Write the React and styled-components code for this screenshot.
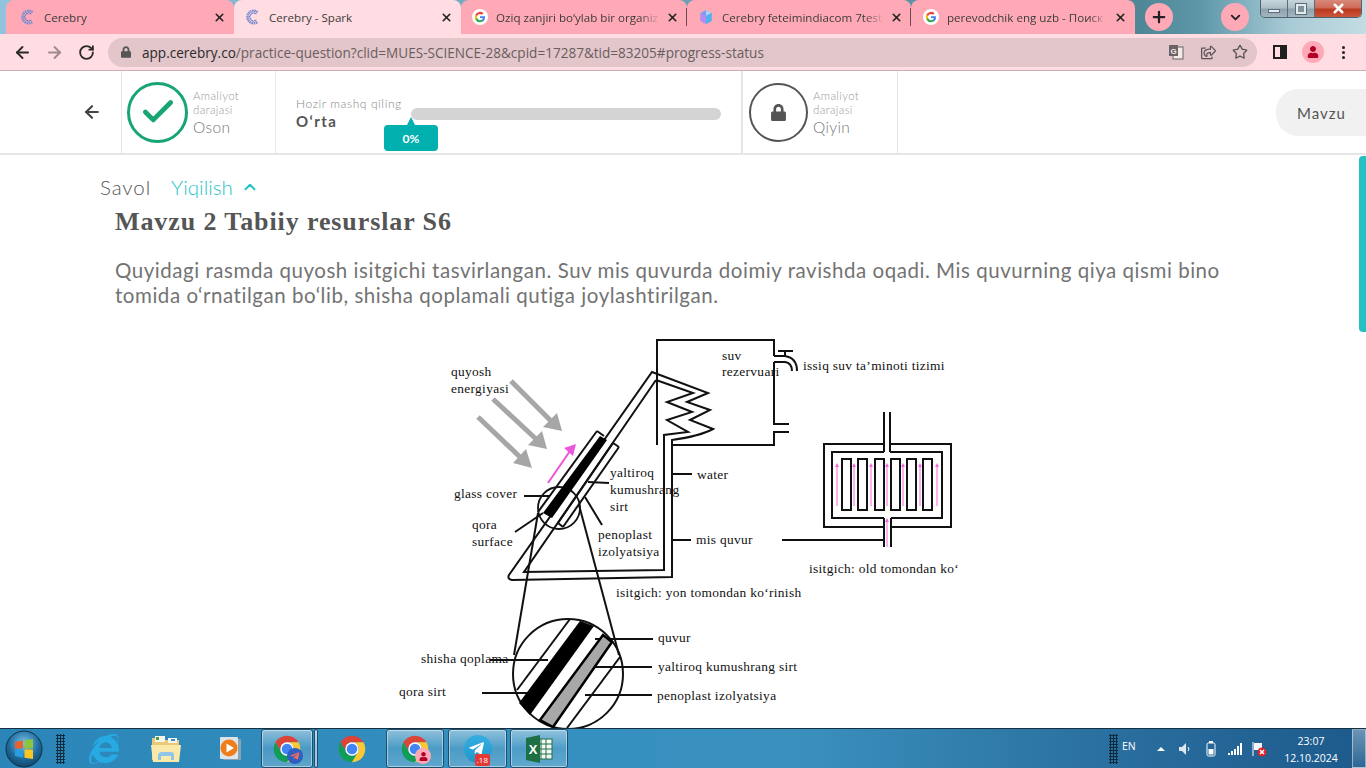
import React from 'react'
import styled, { createGlobalStyle } from 'styled-components'
import { ArrowLeft, ArrowRight, RotateCw, Star, Plus, ChevronDown, ChevronUp, X, Check } from 'lucide-react'
import { FaLock, FaUser, FaRegShareSquare, FaInternetExplorer, FaTelegramPlane } from 'react-icons/fa'

const Global = createGlobalStyle`
  html, body { margin: 0; padding: 0; height: 100%; overflow: hidden; background: #fff; }
  * { box-sizing: border-box; }
`

const Page = styled.div`
  width: 1366px;
  height: 768px;
  display: flex;
  flex-direction: column;
  overflow: hidden;
  font-family: Lato, sans-serif;
`

/* browser chrome */
const TabStrip = styled.div`
  height: 34px;
  flex: none;
  display: flex;
  padding-left: 6px;
  position: relative;
  background: linear-gradient(90deg, #8fc4dc 0, #8fc4dc 6px, #4f8796 1140px, #5e97a8 1200px, #a9cbd6 1290px, #c4dce2 1366px);
`

const Tab = styled.div`
  width: ${p => p.$w}px;
  height: 34px;
  flex: none;
  display: flex;
  align-items: center;
  padding: 0 8px 0 ${p => p.$pad || 14}px;
  border-radius: 8px 8px 0 0;
  background: ${p => (p.$active ? '#ffdde2' : '#ffa9b7')};
  position: relative;
  &::after {
    content: '';
    display: ${p => (p.$sep ? 'block' : 'none')};
    position: absolute;
    right: 0;
    top: 8px;
    height: 18px;
    width: 1px;
    background: #6b4a52;
  }
`

const Favicon = styled.svg`
  width: 16px;
  height: 16px;
  flex: none;
`

const TabTitle = styled.span`
  flex: 1;
  min-width: 0;
  margin-left: 8px;
  font-family: 'Open Sans', sans-serif;
  font-size: 11.6px;
  color: #3c3c3c;
  white-space: nowrap;
  overflow: hidden;
  -webkit-mask-image: ${p => (p.$fade ? 'linear-gradient(90deg, #000 88%, transparent 100%)' : 'none')};
  mask-image: ${p => (p.$fade ? 'linear-gradient(90deg, #000 88%, transparent 100%)' : 'none')};
`

const CloseTab = styled(X)`
  width: 13px;
  height: 13px;
  flex: none;
  margin-left: 6px;
  color: #222;
  stroke-width: 3;
`

const RoundBtn = styled.div`
  width: 28px;
  height: 28px;
  margin: 3px 0 0 ${p => p.$ml}px;
  border-radius: 50%;
  background: #ffa9b7;
  display: flex;
  align-items: center;
  justify-content: center;
  color: #222;
  flex: none;
`

const WinControls = styled.div`
  position: absolute;
  top: 0;
  right: 4px;
  height: 18px;
  width: 102px;
  display: flex;
  border: 1px solid #4d6470;
  border-top: none;
  border-radius: 0 0 5px 5px;
  overflow: hidden;
`

const WinBtn = styled.div`
  flex: ${p => (p.$close ? '0 0 46px' : 1)};
  display: flex;
  align-items: center;
  justify-content: center;
  border-right: 1px solid #5a6d78;
  background: ${p =>
    p.$close
      ? 'linear-gradient(#d8897a 0, #cf6b58 45%, #bb3a1e 55%, #c8563c 100%)'
      : 'linear-gradient(#c7d6dc 0, #aebfc7 45%, #8ea3ad 55%, #a4b6be 100%)'};
  &:last-child { border-right: none; }
`

const MinGlyph = styled.span`
  width: 12px;
  height: 4px;
  background: #e9eef0;
  border: 1px solid #5a6d78;
  margin-top: 5px;
`

const RestoreGlyph = styled.span`
  width: 10px;
  height: 10px;
  border: 2px solid #e4eaec;
  outline: 1px solid #5a6d78;
  background: #7f939d;
`

const Toolbar = styled.div`
  height: 37px;
  flex: none;
  display: flex;
  align-items: center;
  background: #ffdde2;
  padding-left: 6px;
  border-bottom: 1px solid #c9aeb6;
`

const NavBtn = styled.div`
  width: 32px;
  display: flex;
  justify-content: center;
  color: ${p => (p.$off ? '#9e8a8e' : '#2b2b2b')};
  flex: none;
`

const Omnibox = styled.div`
  width: 1149px;
  height: 29px;
  margin-left: 6px;
  border-radius: 15px;
  background: #e2c6ca;
  display: flex;
  align-items: center;
  padding: 0 1px 0 13px;
  flex: none;
`

const UrlLock = styled(FaLock)`
  width: 10px;
  height: 12px;
  color: #555;
  flex: none;
`

const Url = styled.span`
  margin-left: 11px;
  font-family: 'Open Sans', sans-serif;
  font-size: 13.57px;
  color: #6a5d60;
  flex: 1;
  white-space: nowrap;
  b { font-weight: 400; color: #2a2a2a; }
`

const OmniIcon = styled.div`
  width: 32px;
  display: flex;
  justify-content: center;
  align-items: center;
  color: #5c5557;
  flex: none;
`

const ToolIcons = styled.div`
  display: flex;
  align-items: center;
  flex: 1;
  padding-left: 16px;
`

const SidebarGlyph = styled.span`
  width: 14px;
  height: 14px;
  border: 2px solid #1f1f1f;
  border-right-width: 7px;
  flex: none;
`

const Avatar = styled.div`
  width: 22px;
  height: 22px;
  margin-left: 15px;
  border-radius: 50%;
  background: #ffa9b7;
  display: flex;
  align-items: center;
  justify-content: center;
  color: #b00028;
  flex: none;
`

const Dots = styled.div`
  margin-left: 18px;
  display: flex;
  flex-direction: column;
  gap: 2px;
  span { width: 3px; height: 3px; border-radius: 50%; background: #222; }
`

/* practice header */
const Header = styled.div`
  height: 84px;
  flex: none;
  display: flex;
  background: #fff;
  border-bottom: 2px solid #e6e6e6;
`

const BackCell = styled.div`
  width: 122px;
  display: flex;
  align-items: center;
  justify-content: flex-end;
  padding-right: 19px;
  border-right: 1px solid #e6e6e6;
  color: #444;
  flex: none;
`

const LevelCell = styled.div`
  width: ${p => p.$w}px;
  display: flex;
  align-items: center;
  padding-left: ${p => p.$pad}px;
  border-right: 1px solid #e6e6e6;
  flex: none;
`

const Ring = styled.div`
  width: ${p => p.$size}px;
  height: ${p => p.$size}px;
  border-radius: 50%;
  border: 2px solid ${p => p.$color};
  border-width: ${p => p.$bw}px;
  display: flex;
  align-items: center;
  justify-content: center;
  color: ${p => p.$color};
  flex: none;
`

const LevelText = styled.div`
  margin-left: 5px;
  margin-top: 1px;
  color: #9a9a9a;
  font-size: 11.5px;
  line-height: 14px;
  font-weight: 300;
  letter-spacing: 0.35px;
  strong {
    display: block;
    margin-top: 1px;
    font-weight: 300;
    font-size: 15.5px;
    line-height: 18px;
    color: #777;
    letter-spacing: 0.4px;
  }
`

const ProgressCell = styled.div`
  width: 467px;
  border-right: 2px solid #e6e6e6;
  display: flex;
  padding: 26px 0 0 20px;
  flex: none;
`

const ProgressLabel = styled.div`
  width: 115px;
  flex: none;
  font-size: 12px;
  line-height: 14px;
  font-weight: 300;
  color: #888;
  letter-spacing: 0.6px;
  strong {
    display: block;
    margin-top: 1px;
    font-size: 15px;
    line-height: 18px;
    font-weight: 700;
    color: #555;
    letter-spacing: 1.4px;
  }
`

const ProgressTrack = styled.div`
  width: 310px;
  height: 12px;
  margin-top: 11px;
  border-radius: 6px;
  background: #d4d4d4;
  position: relative;
  flex: none;
`

const ProgressTip = styled.div`
  position: absolute;
  left: -27px;
  top: 17px;
  width: 54px;
  height: 26px;
  border-radius: 4px;
  background: #00b0ae;
  color: #fff;
  font-size: 12px;
  font-weight: 700;
  display: flex;
  align-items: center;
  justify-content: center;
  &::before {
    content: '';
    position: absolute;
    left: 23px;
    top: -8px;
    border-left: 4px solid transparent;
    border-right: 4px solid transparent;
    border-bottom: 8px solid #00b0ae;
  }
`

const HeaderSpacer = styled.div`
  flex: 1;
`

const TopicBtn = styled.div`
  width: 90px;
  height: 47px;
  margin-top: 18px;
  padding-left: 21px;
  border-radius: 22px 0 0 22px;
  background: #f1f1f1;
  color: #555;
  font-size: 15px;
  font-weight: 400;
  letter-spacing: 1px;
  display: flex;
  align-items: center;
  flex: none;
`

/* question area */
const Workspace = styled.div`
  flex: 1;
  min-height: 0;
  display: flex;
  background: #fff;
  overflow: hidden;
`

const Content = styled.div`
  flex: 1;
  min-width: 0;
  padding-top: 20px;
`

const Switcher = styled.div`
  display: flex;
  align-items: center;
  height: 24px;
  padding-left: 100px;
  font-size: 20.5px;
  font-weight: 300;
  letter-spacing: 0.9px;
  color: #555;
`

const Solution = styled.span`
  margin-left: 20px;
  color: #1fc4c8;
  letter-spacing: 0;
  display: flex;
  align-items: center;
  gap: 8px;
`

const Title = styled.h1`
  margin: 8px 0 0 115px;
  font-family: 'Liberation Serif', serif;
  font-size: 26px;
  line-height: 30px;
  font-weight: 700;
  color: #555;
  letter-spacing: 0.9px;
`

const Lead = styled.p`
  margin: 21px 0 0 115px;
  font-size: 20.5px;
  line-height: 25px;
  font-weight: 400;
  color: #737373;
  letter-spacing: 0.54px;
  white-space: nowrap;
`

const Figure = styled.svg`
  display: block;
  width: 580px;
  height: 398px;
  margin: 22px 0 0 390px;
`

const Label = styled.text`
  font-family: 'Liberation Serif', serif;
  font-size: 13.4px;
  letter-spacing: 0.32px;
  fill: #111;
`

const Scrollbar = styled.div`
  width: 7px;
  flex: none;
  background: #fff;
  div {
    height: 176px;
    margin-top: 1px;
    border-radius: 4px 0 0 4px;
    background: #25c0c4;
  }
`

/* windows taskbar */
const Taskbar = styled.div`
  height: 40px;
  flex: none;
  display: flex;
  align-items: center;
  border-top: 1px solid #17303f;
  background: linear-gradient(90deg, #2c85b8 0, #3590c0 560px, #3a90bd 800px, #2a70a0 1100px, #1d5a8c 1366px);
  position: relative;
`

const Orb = styled.svg`
  width: 38px;
  height: 38px;
  margin-left: 5px;
  flex: none;
`

const Grip = styled.div`
  width: 9px;
  height: 30px;
  margin-left: ${p => p.$ml}px;
  flex: none;
  background-image: radial-gradient(#0f2c3f 1px, transparent 1.2px);
  background-size: 3px 3px;
`

const Pinned = styled.div`
  width: ${p => p.$w}px;
  height: 39px;
  margin-left: ${p => p.$ml || 0}px;
  display: flex;
  align-items: center;
  justify-content: center;
  position: relative;
  flex: none;
  border-radius: 3px;
  ${p =>
    p.$open &&
    `
    border: 1px solid #1c4f6e;
    box-shadow: inset 0 0 0 1px rgba(255,255,255,.45);
    background: linear-gradient(rgba(255,255,255,.45), rgba(255,255,255,.12) 50%, rgba(255,255,255,.22));
  `}
`

const IconSvg = styled.svg`
  width: ${p => p.$size}px;
  height: ${p => p.$size}px;
  flex: none;
`

const CornerBadge = styled.div`
  position: absolute;
  right: ${p => p.$r}px;
  bottom: ${p => p.$b}px;
  width: 16px;
  height: 16px;
  border-radius: 50%;
  background: ${p => p.$bg};
  color: ${p => p.$fg};
  display: flex;
  align-items: center;
  justify-content: center;
`

const TeleCircle = styled.div`
  width: 28px;
  height: 28px;
  border-radius: 50%;
  background: linear-gradient(#37aee2, #1e96c8);
  color: #fff;
  display: flex;
  align-items: center;
  justify-content: center;
  padding-right: 2px;
`

const CountBadge = styled.div`
  position: absolute;
  right: 16px;
  bottom: 1px;
  padding: 0 2px;
  height: 12px;
  background: #e53935;
  border-radius: 2px;
  color: #fff;
  font-family: 'Open Sans', sans-serif;
  font-size: 8px;
  line-height: 12px;
`

const IeWrap = styled.div`
  width: 32px;
  height: 32px;
  color: #27a9e1;
  display: flex;
  align-items: center;
  justify-content: center;
`

const Tray = styled.div`
  margin-left: auto;
  display: flex;
  align-items: center;
  height: 39px;
  color: #fff;
  font-family: 'Open Sans', sans-serif;
`

const TrayLang = styled.span`
  margin-left: 4px;
  margin-top: -6px;
  font-size: 10.5px;
  width: 28px;
`

const TrayCell = styled.div`
  width: ${p => p.$w}px;
  display: flex;
  justify-content: center;
  align-items: center;
  flex: none;
`

const UpTriangle = styled.span`
  border-left: 4px solid transparent;
  border-right: 4px solid transparent;
  border-bottom: 4px solid #fff;
`

const Clock = styled.div`
  width: 78px;
  margin-top: 3px;
  text-align: center;
  font-size: 10.5px;
  line-height: 17px;
  flex: none;
`

const ShowDesktop = styled.div`
  width: 14px;
  height: 39px;
  margin-left: 2px;
  border: 1px solid rgba(255,255,255,.45);
  background: linear-gradient(rgba(255,255,255,.35), rgba(255,255,255,.08));
  flex: none;
`

const CerebryIcon = () => (
  <Favicon viewBox="0 0 16 16">
    <path d="M12.6 3.2A6.2 6.2 0 1 0 12.6 12.8" fill="none" stroke="#7f8fd0" strokeWidth="2.6" strokeDasharray="1.6 .5" />
    <path d="M11.4 5A4 4 0 1 0 11.4 11" fill="none" stroke="#5d78c4" strokeWidth="1" />
  </Favicon>
)

const GoogleIcon = () => (
  <Favicon viewBox="0 0 16 16">
    <circle cx="8" cy="8" r="8" fill="#fff" />
    <path d="M13 8.2c0-.4 0-.7-.1-1H8v1.9h2.8a2.4 2.4 0 0 1-1 1.6v1.3h1.7c1-.9 1.5-2.2 1.5-3.8z" fill="#4285f4" />
    <path d="M8 13.2c1.4 0 2.6-.5 3.5-1.2L9.800 10.700c-.5.3-1.100.5-1.800.5-1.300 0-2.500-.9-2.900-2.100H3.400v1.300A5.200 5.200 0 0 0 8 13.200z" fill="#34a853" />
    <path d="M5.100 9.100a3.100 3.100 0 0 1 0-2V5.700H3.400a5.200 5.200 0 0 0 0 4.700z" fill="#fbbc05" />
    <path d="M8 4.900c.8 0 1.500.3 2 .8l1.500-1.500A5.200 5.200 0 0 0 3.400 5.700l1.700 1.300C5.500 5.800 6.700 4.900 8 4.900z" fill="#ea4335" />
  </Favicon>
)

const CrystalIcon = () => (
  <Favicon viewBox="0 0 16 16">
    <path d="M8 1l5.500 3v8L8 15l-5.500-3V4z" fill="#7f9cf0" />
    <path d="M8 1l5.500 3L8 7z" fill="#a7d8fa" />
    <path d="M2.500 4L8 7v8l-5.500-3z" fill="#b48cf0" />
    <path d="M8 7l5.500-3v8L8 15z" fill="#4fb2ec" />
  </Favicon>
)

const TranslateIcon = () => (
  <svg width="16" height="16" viewBox="0 0 16 16">
    <rect x="5" y="3" width="10" height="12" fill="#f4eaec" stroke="#6b6365" />
    <rect x="1" y="1" width="9" height="11" fill="#6b6365" />
    <text x="5.500" y="9.500" fontSize="8" fontWeight="700" fill="#f4eaec" textAnchor="middle" fontFamily="Liberation Sans, sans-serif">G</text>
  </svg>
)

const ChromeLogo = ({ size }) => (
  <IconSvg $size={size} viewBox="0 0 48 48">
    <path d="M41.320 14A20 20 0 0 0 6.680 14L15.340 29A10 10 0 0 1 24 14z" fill="#db4437" />
    <path d="M6.680 14A20 20 0 0 0 24 44L32.660 29A10 10 0 0 1 15.340 29z" fill="#0f9d58" />
    <path d="M24 44A20 20 0 0 0 41.320 14H24A10 10 0 0 1 32.660 29z" fill="#fcc934" />
    <circle cx="24" cy="24" r="10" fill="#fff" />
    <circle cx="24" cy="24" r="8" fill="#4285f4" />
  </IconSvg>
)

const FolderIcon = () => (
  <IconSvg $size={32} viewBox="0 0 32 32">
    <path d="M2 5h10l2 2h15v20H2z" fill="#e9c878" />
    <rect x="5" y="3" width="10" height="6" fill="#f8f6ea" />
    <rect x="6" y="4" width="3" height="3" fill="#3ea04a" />
    <rect x="18" y="5" width="9" height="5" fill="#f8f6ea" />
    <rect x="21" y="6" width="4" height="2" fill="#3b8fd4" />
    <path d="M1 12h30l-2 17H3z" fill="#fbe9a9" />
    <path d="M8 27v-5c0-2 2-3 4-3h9c2 0 3 1 3 3v5h-3v-4H11v4z" fill="#8dc6e6" />
  </IconSvg>
)

const MediaIcon = () => (
  <IconSvg $size={30} viewBox="0 0 30 30">
    <rect x="8" y="5" width="18" height="21" rx="1" fill="#8aa4b4" />
    <rect x="5" y="3" width="18" height="22" rx="1" fill="#dde5ea" />
    <circle cx="14" cy="14" r="8.500" fill="#ef7d1a" />
    <path d="M11.500 9.500l7.500 4.500-7.500 4.500z" fill="#fff" />
  </IconSvg>
)

const ExcelIcon = () => (
  <IconSvg $size={30} viewBox="0 0 30 30">
    <rect x="12" y="5" width="16" height="20" fill="#f5f7f5" stroke="#1f7145" />
    <path d="M17 5v20M22 5v20M12 10h16M12 15h16M12 20h16" stroke="#1f7145" strokeWidth="1" />
    <path d="M2 4l14-3v28l-14-3z" fill="#1e6f43" />
    <text x="9" y="20" fontSize="13" fontWeight="700" fill="#fff" textAnchor="middle" fontFamily="Liberation Sans, sans-serif">X</text>
  </IconSvg>
)

const labels = [
  ['quyosh', 451, 376], ['energiyasi', 451, 393], ['glass cover', 454, 498], ['qora', 472, 529],
  ['surface', 472, 546], ['yaltiroq', 610, 477], ['kumushrang', 610, 494], ['sirt', 610, 511],
  ['penoplast', 598, 539], ['izolyatsiya', 598, 556], ['water', 697, 479], ['mis quvur', 696, 544],
  ['suv', 722, 360], ['rezervuari', 722, 376], ['issiq suv ta’minoti tizimi', 803, 370],
  ['isitgich: old tomondan ko‘', 809, 573], ['isitgich: yon tomondan ko‘rinish', 616, 597],
  ['quvur', 658, 642], ['yaltiroq kumushrang sirt', 658, 671], ['penoplast izolyatsiya', 657, 700],
  ['shisha qoplama', 421, 663], ['qora sirt', 399, 696],
]

// thin black strokes of the drawing, x1 y1 x2 y2
const lines = [
  [524, 496, 550, 496], [515, 532, 543, 513], [588, 482, 609, 483], [585, 497, 602, 525],
  [672, 474, 692, 474], [672, 540, 691, 540], [782, 540, 885, 540],
  [538, 513, 514, 655], [579, 505, 619, 655],
  [595, 639, 653, 639], [585, 667, 652, 667], [585, 695, 652, 695], [490, 660, 548, 660], [482, 693, 537, 693],
  [597, 431, 538, 512], [597, 431, 604, 436],
  [613, 443, 619, 447], [613, 443, 558, 523], [619, 447, 563, 527], [558, 523, 563, 527],
  [570, 619, 517, 690], [620, 657, 567, 728],
  [884, 412, 884, 452], [890, 412, 890, 452], [884, 518, 884, 547], [891, 518, 891, 547],
]

const tubes = [842, 858, 875, 891, 907, 923]
const flows = [837, 854, 871, 887, 903, 920, 937]

const Diagram = () => (
  <Figure viewBox="390 330 580 398">
    <g fill="none" stroke="#111" strokeWidth="2">
      <path d="M774 356V340H657V445M672 445H774V432H789M789 424H774V362" />
      <path d="M774 356H785Q797 358 797 371M774 362H785Q792 363 792 371" />
      <path d="M778 351H793M785 351V356" />
      <path d="M652 372L708 393L687 402L710 410L690 420L713 429Q700 436 672 440V577L512 580Q507 579 509 575L652 372Z" />
      <path d="M656 380L693 393L667 402L692 412L667 420L688 432L664 435V570L524 572L656 380" />
      <path d="M884 444H824V527H884M891 527H951V444H890" />
      <path d="M884 452H832V518H884M891 518H942V452H890" />
      <circle cx="559" cy="508" r="21" strokeWidth="1.800" />
      {tubes.map(x => (
        <rect key={x} x={x} y="459" width="9" height="51" />
      ))}
      {lines.map(([x1, y1, x2, y2]) => (
        <line key={`${x1}-${y1}-${x2}`} x1={x1} y1={y1} x2={x2} y2={y2} />
      ))}
    </g>
    <path d="M600 436L607 440L552 518L543 513z" fill="#000" />

    <g fill="#a6a6a6" stroke="none">
      <path d="M562 431L543 427L557 413z" />
      <path d="M547 449L528 445L542 431z" />
      <path d="M532 468L513 463L526 449z" />
    </g>
    <g stroke="#a6a6a6" strokeWidth="5">
      <line x1="511" y1="381" x2="551" y2="421" />
      <line x1="493" y1="399" x2="536" y2="439" />
      <line x1="478" y1="417" x2="520" y2="457" />
    </g>
    <line x1="548" y1="483" x2="570" y2="451" stroke="#ee55dd" strokeWidth="2" />
    <path d="M576 444L564 448L573 456z" fill="#ee55dd" />
    <g stroke="#f06ade" strokeWidth="1" fill="#f06ade">
      {flows.map(x => (
        <g key={x}>
          <line x1={x} y1="506" x2={x} y2="466" />
          <polygon points={`${x},463 ${x - 2},467 ${x + 2},467`} stroke="none" />
        </g>
      ))}
      <line x1="887" y1="547" x2="887" y2="521" />
      <polygon points="887,518 885,522 889,522" stroke="none" />
    </g>

    <circle cx="568" cy="674" r="55" fill="none" stroke="#111" strokeWidth="2" />
    <path d="M580 621L594 626L530 715L519 703z" fill="#000" />
    <path d="M603 635L612 642L553 727L540 720z" fill="#a8a8a8" stroke="#000" strokeWidth="2.500" />
    {labels.map(([t, x, y]) => (
      <Label key={t} x={x} y={y}>{t}</Label>
    ))}
  </Figure>
)

export default function App() {
  return (
    <Page>
      <Global />
      <TabStrip>
        <Tab $w={228}><CerebryIcon /><TabTitle>Cerebry</TabTitle><CloseTab /></Tab>
        <Tab $w={227} $active $pad={11}><CerebryIcon /><TabTitle>Cerebry - Spark</TabTitle><CloseTab /></Tab>
        <Tab $w={226} $pad={11} $sep><GoogleIcon /><TabTitle $fade>Oziq zanjiri bo‘ylab bir organiz</TabTitle><CloseTab /></Tab>
        <Tab $w={224} $pad={11} $sep><CrystalIcon /><TabTitle $fade>Cerebry feteimindiacom 7testi</TabTitle><CloseTab /></Tab>
        <Tab $w={224} $pad={12}><GoogleIcon /><TabTitle $fade>perevodchik eng uzb - Поиск</TabTitle><CloseTab /></Tab>
        <RoundBtn $ml={10}><Plus size={18} strokeWidth={3} /></RoundBtn>
        <RoundBtn $ml={48}><ChevronDown size={15} strokeWidth={3} /></RoundBtn>
        <WinControls>
          <WinBtn><MinGlyph /></WinBtn>
          <WinBtn><RestoreGlyph /></WinBtn>
          <WinBtn $close><X size={15} color="#fff" strokeWidth={4} /></WinBtn>
        </WinControls>
      </TabStrip>
      <Toolbar>
        <NavBtn><ArrowLeft size={19} strokeWidth={2.4} /></NavBtn>
        <NavBtn $off><ArrowRight size={19} strokeWidth={2.4} /></NavBtn>
        <NavBtn><RotateCw size={17} strokeWidth={2.6} /></NavBtn>
        <Omnibox>
          <UrlLock />
          <Url><b>app.cerebry.co</b>/practice-question?clid=MUES-SCIENCE-28&amp;cpid=17287&amp;tid=83205#progress-status</Url>
          <OmniIcon><TranslateIcon /></OmniIcon>
          <OmniIcon><FaRegShareSquare size={15} /></OmniIcon>
          <OmniIcon><Star size={16} strokeWidth={2} /></OmniIcon>
        </Omnibox>
        <ToolIcons>
          <SidebarGlyph />
          <Avatar><FaUser size={12} /></Avatar>
          <Dots><span /><span /><span /></Dots>
        </ToolIcons>
      </Toolbar>

      <Header>
        <BackCell><ArrowLeft size={20} strokeWidth={2.6} /></BackCell>
        <LevelCell $w={154} $pad={5}>
          <Ring $size={61} $bw={3} $color="#17a673"><Check size={38} strokeWidth={3} /></Ring>
          <LevelText>Amaliyot<br />darajasi<strong>Oson</strong></LevelText>
        </LevelCell>
        <ProgressCell>
          <ProgressLabel>Hozir mashq qiling<strong>O‘rta</strong></ProgressLabel>
          <ProgressTrack><ProgressTip>0%</ProgressTip></ProgressTrack>
        </ProgressCell>
        <LevelCell $w={155} $pad={6}>
          <Ring $size={59} $bw={2} $color="#555"><FaLock size={17} /></Ring>
          <LevelText>Amaliyot<br />darajasi<strong>Qiyin</strong></LevelText>
        </LevelCell>
        <HeaderSpacer />
        <TopicBtn>Mavzu</TopicBtn>
      </Header>

      <Workspace>
        <Content>
          <Switcher>Savol<Solution>Yiqilish <ChevronUp size={18} strokeWidth={2.5} /></Solution></Switcher>
          <Title>Mavzu 2 Tabiiy resurslar S6</Title>
          <Lead>
            Quyidagi rasmda quyosh isitgichi tasvirlangan. Suv mis quvurda doimiy ravishda oqadi. Mis quvurning qiya qismi bino<br />
            tomida o‘rnatilgan bo‘lib, shisha qoplamali qutiga joylashtirilgan.
          </Lead>
          <Diagram />
        </Content>
        <Scrollbar><div /></Scrollbar>
      </Workspace>

      <Taskbar>
        <Orb viewBox="0 0 38 38">
          <defs>
            <radialGradient id="orb" cx="50%" cy="35%" r="70%">
              <stop offset="0" stopColor="#7cc4ea" />
              <stop offset="0.6" stopColor="#1d6a9c" />
              <stop offset="1" stopColor="#0f3f5e" />
            </radialGradient>
          </defs>
          <circle cx="19" cy="19" r="18" fill="url(#orb)" stroke="#0e3347" />
          <path d="M10 12l8-1.500v8H10z" fill="#e8622c" />
          <path d="M19.500 10.300l8.500-1.300v9.500h-8.500z" fill="#8cc63f" />
          <path d="M10 19.500h8v8L10 26z" fill="#2a9de0" />
          <path d="M19.500 19.500H28V29l-8.500-1.300z" fill="#f9c623" />
        </Orb>
        <Grip $ml={13} />
        <Pinned $w={44} $ml={17}>
          <IeWrap><FaInternetExplorer size={30} /></IeWrap>
        </Pinned>
        <Pinned $w={44} $ml={18}><FolderIcon /></Pinned>
        <Pinned $w={44} $ml={20}><MediaIcon /></Pinned>
        <Pinned $w={52} $ml={9} $open>
          <ChromeLogo size={32} />
          <CornerBadge $r={9} $b={3} $bg="#2f5fc0" $fg="#f36b5a"><FaTelegramPlane size={10} /></CornerBadge>
        </Pinned>
        <Pinned $w={4} $ml={1} $open />
        <Pinned $w={66} $ml={1}><ChromeLogo size={32} /></Pinned>
        <Pinned $w={58} $ml={1} $open>
          <ChromeLogo size={32} />
          <CornerBadge $r={12} $b={3} $bg="#ffa9b7" $fg="#b00028"><FaUser size={9} /></CornerBadge>
        </Pinned>
        <Pinned $w={59} $ml={4} $open>
          <TeleCircle><FaTelegramPlane size={17} /></TeleCircle>
          <CountBadge>.18</CountBadge>
        </Pinned>
        <Pinned $w={58} $ml={3} $open><ExcelIcon /></Pinned>
        <Tray>
          <Grip $ml={0} />
          <TrayLang>EN</TrayLang>
          <TrayCell $w={22}><UpTriangle /></TrayCell>
          <TrayCell $w={26}>
            <svg width="14" height="14" viewBox="0 0 14 14"><path d="M1 5h3l4-4v12l-4-4H1z" fill="#dfe8ee" /><path d="M10 5q2 2 0 4" stroke="#fff" fill="none" /></svg>
          </TrayCell>
          <TrayCell $w={26}>
            <svg width="10" height="16" viewBox="0 0 10 16"><rect x="3" y="0" width="4" height="2" fill="#fff" /><rect x="1" y="2" width="8" height="13" rx="1.500" fill="none" stroke="#fff" /><rect x="2.500" y="8" width="5" height="5.500" fill="#fff" /></svg>
          </TrayCell>
          <TrayCell $w={22}>
            <svg width="16" height="12" viewBox="0 0 16 12"><path d="M1 10h2v2H1zM4 8h2v4H4zM7 6h2v6H7zM10 3h2v9h-2zM13 0h2v12h-2z" fill="#fff" /></svg>
          </TrayCell>
          <TrayCell $w={26}>
            <svg width="16" height="16" viewBox="0 0 16 16"><path d="M2 1v14" stroke="#fff" /><path d="M3 2h8v7H3z" fill="#f2f6f8" /><circle cx="11" cy="11" r="4.500" fill="#d8232a" /><path d="M9 9l4 4M13 9l-4 4" stroke="#fff" strokeWidth="1.500" /></svg>
          </TrayCell>
          <Clock>23:07<br />12.10.2024</Clock>
          <ShowDesktop />
        </Tray>
      </Taskbar>
    </Page>
  )
}
